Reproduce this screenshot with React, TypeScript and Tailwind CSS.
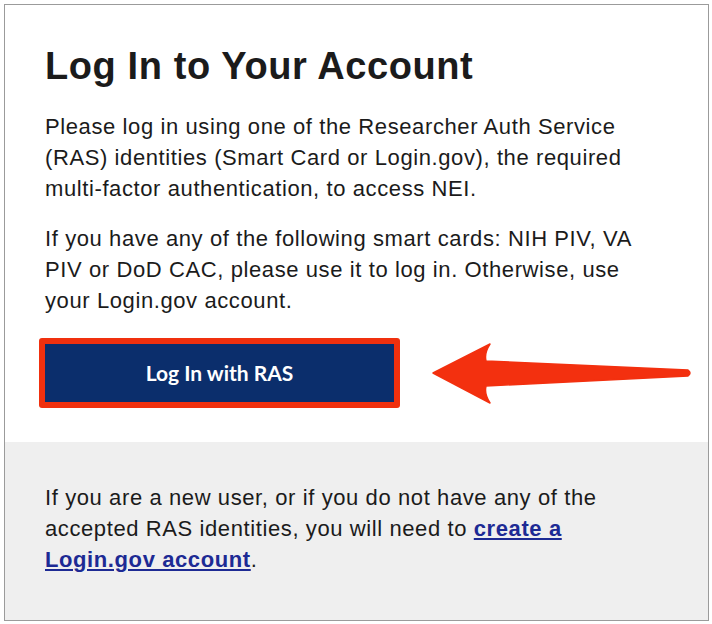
import React from 'react';

const body = "font-['Liberation_Sans',Arial,sans-serif] text-[#1b1b1b]";
const copy = `${body} w-[600px] text-[22px] leading-[31px] tracking-[0.6px]`;

function Arrow() {
  return (
    <svg width="264" height="64" viewBox="0 0 264 64" className="shrink-0">
      <path
        d="M3 32 L60 3 Q54 12 56 20 L258 29 Q262 32 258 35 L56 45 Q54 53 60 62 Z"
        fill="#f3300f"
        stroke="#f3300f"
        strokeWidth="1.5"
        strokeLinejoin="round"
      />
    </svg>
  );
}

export default function App() {
  return (
    <div className="h-[624px] w-[712px] bg-white p-[4px]">
      <div className="flex h-[617px] w-[705px] flex-col border border-[#9b9b9b] bg-white">
        <div className="px-[40px] pb-[34px] pt-[38px]">
          <h1 className={`${body} text-[38px] font-bold leading-[46px] tracking-[0.6px]`}>Log In to Your Account</h1>
          <p className={`${copy} mt-[22px]`}>
            Please log in using one of the Researcher Auth Service (RAS) identities (Smart Card or Login.gov), the
            required multi-factor authentication, to access NEI.
          </p>
          <p className={`${copy} mt-[19px]`}>
            If you have any of the following smart cards: NIH PIV, VA PIV or DoD CAC, please use it to log in.
            Otherwise, use your Login.gov account.
          </p>
          <div className="mt-[22px] flex items-center">
            <div className="ml-[-6px] rounded-[3px] bg-[#f0300e] p-[6px]">
              <button className="flex h-[58px] w-[349px] items-center justify-center bg-[#0b2e6c] font-['Lato',sans-serif] text-[21px] font-bold text-white">
                Log In with RAS
              </button>
            </div>
            <div className="ml-[30px]">
              <Arrow />
            </div>
          </div>
        </div>
        <div className="flex-1 bg-[#efefef] px-[40px] pt-[40px]">
          <p className={copy}>
            If you are a new user, or if you do not have any of the accepted RAS identities, you will need to{' '}
            <a href="#" className="font-bold text-[#1d2a94] underline">
              create a Login.gov account
            </a>
            .
          </p>
        </div>
      </div>
    </div>
  );
}
